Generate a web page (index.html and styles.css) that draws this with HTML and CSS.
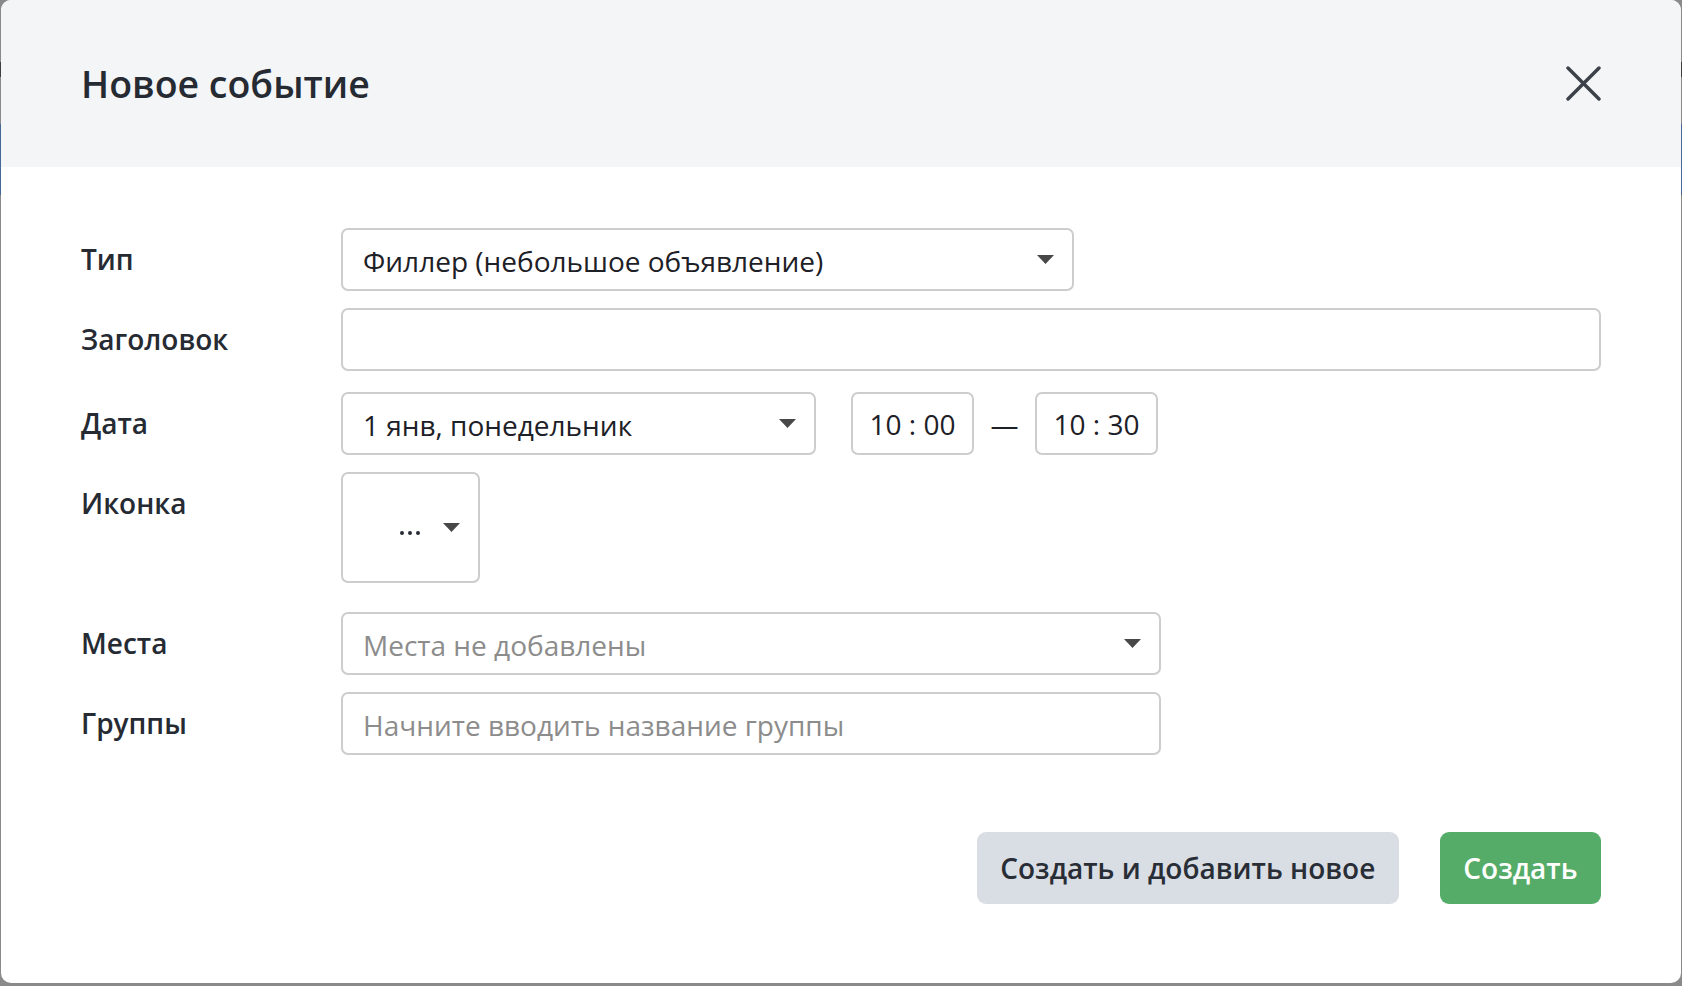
FILE: index.html
```html
<!DOCTYPE html>
<html lang="ru">
<head>
<meta charset="utf-8">
<title>Новое событие</title>
<link rel="stylesheet" href="styles.css">
</head>
<body>
<div class="modal">
  <div class="modal-header">
    <h1 class="modal-title">Новое событие</h1>
    <button class="close-btn" aria-label="Закрыть">
      <svg width="35" height="35" viewBox="0 0 35 35"><path d="M2 2 L33 33 M33 2 L2 33" stroke="#3b4049" stroke-width="3.4" stroke-linecap="round" fill="none"/></svg>
    </button>
  </div>
  <div class="modal-body">
    <div class="row row-type">
      <div class="label">Тип</div>
      <div class="control select w-type">
        <span class="value">Филлер (небольшое объявление)</span>
        <svg class="caret" width="17" height="9" viewBox="0 0 17 9"><path d="M0 0 H17 L8.5 9 Z" fill="#484848"/></svg>
      </div>
    </div>
    <div class="row row-title">
      <div class="label">Заголовок</div>
      <div class="control w-full"></div>
    </div>
    <div class="row row-date">
      <div class="label">Дата</div>
      <div class="date-line">
        <div class="control select w-date">
          <span class="value">1 янв, понедельник</span>
          <svg class="caret" width="17" height="9" viewBox="0 0 17 9"><path d="M0 0 H17 L8.5 9 Z" fill="#484848"/></svg>
        </div>
        <div class="control time">10 : 00</div>
        <div class="dash">—</div>
        <div class="control time">10 : 30</div>
      </div>
    </div>
    <div class="row row-icon">
      <div class="label">Иконка</div>
      <div class="control icon-box">
        <span class="dots"><i></i><i></i><i></i></span>
        <svg class="caret" width="17" height="9" viewBox="0 0 17 9"><path d="M0 0 H17 L8.5 9 Z" fill="#484848"/></svg>
      </div>
    </div>
    <div class="row row-places">
      <div class="label">Места</div>
      <div class="control select w-mid">
        <span class="value placeholder">Места не добавлены</span>
        <svg class="caret" width="17" height="9" viewBox="0 0 17 9"><path d="M0 0 H17 L8.5 9 Z" fill="#484848"/></svg>
      </div>
    </div>
    <div class="row row-groups">
      <div class="label">Группы</div>
      <div class="control w-mid">
        <span class="value placeholder">Начните вводить название группы</span>
      </div>
    </div>
    <div class="modal-footer">
      <button class="btn btn-secondary">Создать и добавить новое</button>
      <button class="btn btn-primary">Создать</button>
    </div>
  </div>
</div>
</body>
</html>
```

FILE: styles.css
```css
html, body {
  margin: 0;
  padding: 0;
}
body {
  background: linear-gradient(to bottom,
    #8a8a8a 0, #8a8a8a 62px,
    #3e3e3e 62px, #3e3e3e 77px,
    #8a8a8a 77px, #8a8a8a 124px,
    #46679a 124px, #46679a 195px,
    #8a8a8a 195px, #8a8a8a 100%);
  font-family: "Open Sans", "DejaVu Sans", sans-serif;
  color: #262b33;
  width: 1682px;
  height: 986px;
  overflow: hidden;
}
.modal {
  margin-left: 1px;
  width: 1680px;
  height: 983px;
  background: #ffffff;
  border-radius: 10px;
  overflow: hidden;
  display: flex;
  flex-direction: column;
}
.modal-header {
  height: 167px;
  flex: none;
  background: #f4f5f7;
  display: flex;
  align-items: center;
  justify-content: space-between;
  padding: 0 80px 0 80px;
  box-sizing: border-box;
}
.modal-title {
  margin: 0;
  font-size: 37.5px;
  font-weight: 600;
  color: #262b33;
}
.close-btn {
  border: 0;
  background: none;
  padding: 0;
  width: 35px;
  height: 35px;
  display: flex;
  cursor: pointer;
}
.modal-body {
  padding: 61px 80px 0 80px;
}
.row {
  display: grid;
  grid-template-columns: 260px 1fr;
  align-items: start;
}
.row-type { margin-bottom: 17px; }
.row-title { margin-bottom: 21px; }
.row-date { margin-bottom: 17px; }
.row-icon { margin-bottom: 29px; }
.row-places { margin-bottom: 17px; }
.label {
  font-size: 28px;
  font-weight: 600;
  line-height: 63px;
  color: #262b33;
}
.control {
  box-sizing: border-box;
  height: 63px;
  border: 2px solid #cdcdcd;
  border-radius: 7px;
  background: #fff;
  display: flex;
  align-items: center;
  padding: 0 18px 0 20px;
  font-size: 28px;
  color: #1d2026;
}
.select {
  justify-content: space-between;
}
.value {
  white-space: nowrap;
  position: relative;
  top: 1px;
}
.placeholder {
  color: #8c8c8c;
}
.w-type { width: 733px; }
.w-full { width: 100%; }
.w-date { width: 475px; }
.w-mid { width: 820px; }
.date-line {
  display: flex;
  align-items: center;
}
.time {
  width: 123px;
  justify-content: center;
  padding: 0;
  margin-left: 35px;
}
.dash {
  width: 61px;
  text-align: center;
  font-size: 28px;
  color: #1d2026;
}
.dash + .time {
  margin-left: 0;
}
.icon-box {
  width: 139px;
  height: 111px;
  justify-content: flex-end;
  padding-right: 18px;
  gap: 23px;
}
.dots {
  display: flex;
  gap: 4px;
  position: relative;
  top: 5px;
}
.dots i {
  display: block;
  width: 4px;
  height: 4px;
  border-radius: 50%;
  background: #262b33;
}
.caret {
  flex: none;
}
.modal-footer {
  margin-top: 77px;
  display: flex;
  justify-content: flex-end;
  gap: 41px;
}
.btn {
  height: 72px;
  padding: 0 23.5px;
  border: 0;
  border-radius: 9px;
  font-family: "Open Sans", "DejaVu Sans", sans-serif;
  font-size: 28px;
  font-weight: 600;
  cursor: pointer;
}
.btn-secondary {
  background: #d9dde4;
  color: #282d36;
}
.btn-primary {
  background: #55ac68;
  color: #ffffff;
}
```
